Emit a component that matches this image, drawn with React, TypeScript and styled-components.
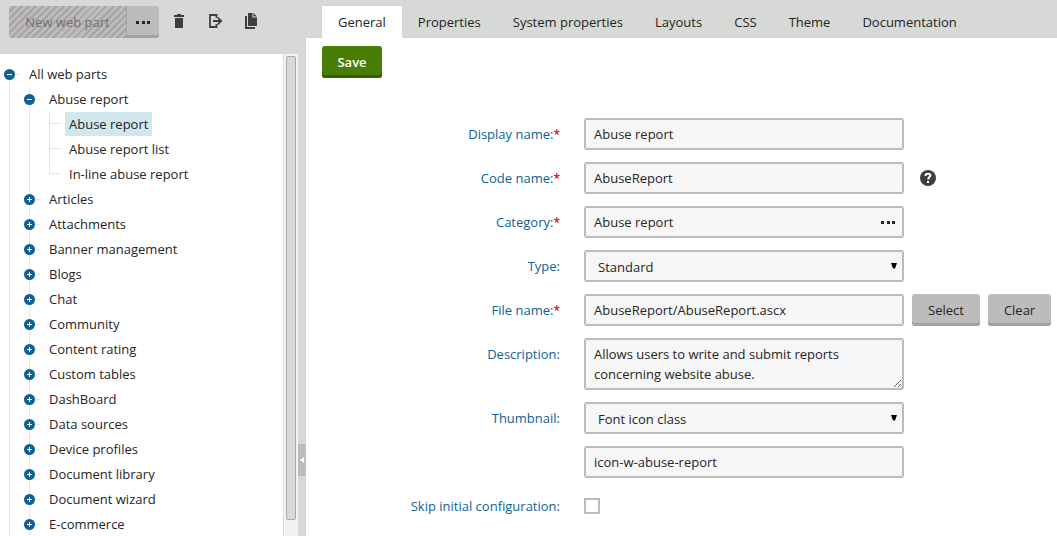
import React from "react";
import styled, { createGlobalStyle, css } from "styled-components";

const c = {
  bar: "#d6d9d6",
  button: "#bdbbbb",
  buttonEdge: "#a3a2a2",
  text: "#262524",
  icon: "#403e3d",
  brand: "#0f6194",
  line: "#e5e5e5",
  field: "#f6f6f6",
};

const GlobalStyle = createGlobalStyle`
  *, *::before, *::after { box-sizing: border-box; }
  body { margin: 0; background: #fff; }
  body, button, input, select, textarea {
    font-family: "Open Sans", "Noto Sans", sans-serif;
    font-size: 13px;
    line-height: 20px;
    color: ${c.text};
  }
  button { border: 0; padding: 0; background: none; cursor: pointer; }
`;

const Shell = styled.div`
  display: flex;
  height: 100vh;
  overflow: hidden;
`;

const Sidebar = styled.aside`
  flex: 0 0 306px;
  display: flex;
  flex-direction: column;
  background: ${c.bar};
`;

const Toolbar = styled.div`
  display: flex;
  align-items: flex-start;
  height: 54px;
  flex: none;
  padding: 6px 9px;
`;

const grayButton = css`
  height: 32px;
  background: ${c.button};
  box-shadow: inset 0 -3px 0 ${c.buttonEdge};
`;

const NewButton = styled.button`
  width: 118px;
  height: 32px;
  border-radius: 3px 0 0 3px;
  border-right: 1px solid ${c.buttonEdge};
  color: #737070;
  background: repeating-linear-gradient(135deg, #bdbbbb 0 3px, #a6a5a5 3px 5px);
`;

const MoreButton = styled.button`
  ${grayButton}
  width: 32px;
  border-radius: 0 3px 3px 0;
  display: flex;
  align-items: center;
  justify-content: center;
  margin-right: 2px;
`;

const IconButton = styled.button`
  width: 36px;
  height: 32px;
  display: flex;
  align-items: center;
  justify-content: center;
`;

const SideBody = styled.div`
  flex: 1;
  min-height: 0;
  display: flex;
`;

const TreePane = styled.nav`
  flex: 1;
  min-width: 0;
  overflow: hidden;
  background: #fff;
  padding: 8px 4px;
`;

const Branch = styled.ul<{ $nested?: boolean }>`
  list-style: none;
  margin: 0 0 0 ${(p) => (p.$nested ? 20 : 0)}px;
  padding: 0;
`;

const Item = styled.li<{ $from?: number; $to?: string }>`
  background: linear-gradient(${c.line}, ${c.line}) 5px ${(p) => p.$from ?? 0}px / 1px
    ${(p) => p.$to ?? "100%"} no-repeat;
`;

const Row = styled.div<{ $leaf?: boolean }>`
  display: flex;
  height: 25px;
  padding-left: ${(p) => (p.$leaf ? 5 : 0)}px;

  &::before {
    content: "";
    order: 1;
    width: ${(p) => (p.$leaf ? 12 : 6)}px;
    height: 1px;
    margin-top: ${(p) => (p.$leaf ? 11 : 12)}px;
    background: ${c.line};
  }
`;

const Toggle = styled.button`
  width: 11px;
  height: 25px;
  display: flex;
  align-items: center;
`;

const NodeLink = styled.a<{ $selected?: boolean }>`
  order: 2;
  height: 24px;
  line-height: 24px;
  margin-left: 4px;
  padding: 0 4px;
  color: ${c.text};
  text-decoration: none;
  white-space: nowrap;
  background: ${(p) => (p.$selected ? "#d0e7ed" : "transparent")};
`;

const ScrollTrack = styled.div`
  flex: 0 0 15px;
  padding: 2px 2px 16px;
  border-left: 1px solid #dcdcdc;
  background: #f2f2f2;
  display: flex;
`;

const ScrollThumb = styled.div`
  flex: 1;
  border: 1px solid #a8a8a8;
  border-radius: 2px;
  background: #d9d9d9;
`;

const Splitter = styled.div`
  flex: 0 0 8px;
  display: flex;
  align-items: flex-end;
  padding-bottom: 60px;
`;

const CollapseButton = styled.button`
  width: 8px;
  height: 32px;
  background: ${c.button};
  display: flex;
  align-items: center;
  justify-content: center;
`;

const Main = styled.main`
  flex: 1;
  min-width: 0;
  display: flex;
  flex-direction: column;
`;

const Tabs = styled.nav`
  display: flex;
  flex: none;
  height: 38px;
  padding: 6px 16px 0;
  background: ${c.bar};
`;

const Tab = styled.a<{ $active?: boolean }>`
  padding: 6px 16px;
  color: ${c.text};
  text-decoration: none;
  white-space: nowrap;
  background: ${(p) => (p.$active ? "#fff" : "transparent")};
`;

const Content = styled.div`
  padding: 8px 0 8px 16px;
`;

const SaveButton = styled.button`
  width: 60px;
  height: 32px;
  border-radius: 3px;
  color: #fff;
  font-weight: 600;
  background: #497d04;
  box-shadow: inset 0 -3px 0 #365e02;
`;

const Form = styled.form`
  display: flex;
  flex-direction: column;
  gap: 12px;
  margin-top: 40px;
`;

const FieldRow = styled.div`
  display: grid;
  grid-template-columns: 262px 320px 1fr;
  align-items: start;
`;

const Label = styled.label`
  padding: 6px 24px 6px 0;
  text-align: right;
  white-space: nowrap;
  color: ${c.brand};
`;

const Required = styled.span`
  color: #e80000;
  font-size: 12px;
  line-height: 12px;
  font-weight: 600;
`;

const Fields = styled.div`
  grid-column: 2;
  position: relative;
  display: flex;
  align-items: center;
  min-height: 32px;
`;

const control = css`
  display: block;
  width: 100%;
  height: 32px;
  margin: 0;
  padding: 4px 8px;
  border: 2px solid ${c.button};
  border-radius: 3px;
  background: ${c.field};
  outline: 0;
`;

const TextInput = styled.input`
  ${control}
`;

const TextArea = styled.textarea`
  ${control}
  height: 52px;
  overflow: hidden;
  resize: vertical;
`;

const Select = styled.select`
  ${control}
  appearance: none;
  padding: 5px 12px 3px;
`;

const SelectArrow = styled.svg`
  position: absolute;
  right: 7px;
  top: 13px;
  pointer-events: none;
`;

const PickButton = styled.button`
  position: absolute;
  right: 2px;
  top: 2px;
  width: 28px;
  height: 28px;
  display: flex;
  align-items: center;
  justify-content: center;
`;

const CheckBox = styled.input`
  appearance: none;
  width: 16px;
  height: 16px;
  margin: 0;
  border: 2px solid ${c.button};
  background: #fff;
`;

const Actions = styled.div`
  display: flex;
  align-items: center;
  gap: 8px;
  min-height: 32px;
  padding-left: 8px;
`;

const ActionButton = styled.button`
  ${grayButton}
  padding: 0 16px;
  border-radius: 3px;
`;

const HelpButton = styled.button`
  width: 16px;
  height: 16px;
  margin-left: 8px;
  display: flex;
`;

const Dots = () => (
  <svg width="15" height="3" viewBox="0 0 15 3" fill={c.text} aria-hidden="true">
    <rect x="0" width="3" height="3" />
    <rect x="6" width="3" height="3" />
    <rect x="11" width="3" height="3" />
  </svg>
);

const TrashIcon = () => (
  <svg width="16" height="16" viewBox="0 0 16 16" fill={c.icon} aria-hidden="true">
    <path d="M6 0h4v1h3v2H3V1h3zM4 4h8v10H4z" />
  </svg>
);

const ExportIcon = () => (
  <svg width="16" height="16" viewBox="0 0 16 16" fill="none" stroke={c.icon} strokeWidth="2" aria-hidden="true">
    <path d="M9.500 4V1H3v12h6.500v-3" strokeWidth="1.800" />
    <path d="M6 7h8M10.800 3.600L14.200 7l-3.400 3.400" strokeWidth="1.800" />
  </svg>
);

const CopyIcon = () => (
  <svg width="16" height="18" viewBox="0 -1 16 18" fill={c.icon} aria-hidden="true">
    <path d="M5 -1h4.500v4.500H14V12H5zM10.500 -1L14 2.500h-3.500zM2 2h2v11h8v2H2z" />
  </svg>
);

const ToggleIcon = ({ open }: { open?: boolean }) => (
  <svg width="11" height="11" viewBox="0 0 11 11" aria-hidden="true">
    <circle cx="5.5" cy="5.5" r="5.5" fill={c.brand} />
    <path d={open ? "M3 5.5h5" : "M3 5.5h5M5.5 3v5"} stroke="#fff" strokeWidth="1" />
  </svg>
);

const HelpIcon = () => (
  <svg width="16" height="16" viewBox="0 0 16 16" aria-hidden="true">
    <circle cx="8" cy="8" r="8" fill={c.icon} />
    <path d="M5.6 6V5.4C5.6 4.300 6.500 3.800 8 3.800s2.400.7 2.400 1.800c0 1.500-2.200 1.600-2.200 3.900" fill="none" stroke="#fff" strokeWidth="2" />
    <rect x="7" y="11" width="2" height="2" fill="#fff" />
  </svg>
);

const Arrow = () => (
  <SelectArrow width="6" height="6" viewBox="0 0 6 6" aria-hidden="true">
    <path d="M0 0h6L4 5.500H2z" />
  </SelectArrow>
);

const tabs = ["General", "Properties", "System properties", "Layouts", "CSS", "Theme", "Documentation"];

const leaves = ["Abuse report", "Abuse report list", "In-line abuse report"];

const categories = [
  "Articles",
  "Attachments",
  "Banner management",
  "Blogs",
  "Chat",
  "Community",
  "Content rating",
  "Custom tables",
  "DashBoard",
  "Data sources",
  "Device profiles",
  "Document library",
  "Document wizard",
  "E-commerce",
];

type NodeProps = { name: string; open?: boolean };

const TreeNode = ({ name, open }: NodeProps) => (
  <Row>
    <Toggle type="button" aria-expanded={!!open} aria-label={name}>
      <ToggleIcon open={open} />
    </Toggle>
    <NodeLink href="#">{name}</NodeLink>
  </Row>
);

type FieldProps = {
  label?: string;
  id: string;
  required?: boolean;
  actions?: React.ReactNode;
  children: React.ReactNode;
};

const Field = ({ label, id, required, actions, children }: FieldProps) => (
  <FieldRow>
    {label && (
      <Label htmlFor={id}>
        {label}:{required && <Required>*</Required>}
      </Label>
    )}
    <Fields>{children}</Fields>
    {actions && <Actions>{actions}</Actions>}
  </FieldRow>
);

export default function App() {
  return (
    <Shell>
      <GlobalStyle />
      <Sidebar>
        <Toolbar>
          <NewButton type="button" disabled>
            New web part
          </NewButton>
          <MoreButton type="button" aria-label="More actions">
            <Dots />
          </MoreButton>
          <IconButton type="button" aria-label="Delete">
            <TrashIcon />
          </IconButton>
          <IconButton type="button" aria-label="Export">
            <ExportIcon />
          </IconButton>
          <IconButton type="button" aria-label="Clone">
            <CopyIcon />
          </IconButton>
        </Toolbar>
        <SideBody>
          <TreePane aria-label="Web parts">
            <Branch>
              <Item $from={12}>
                <TreeNode name="All web parts" open />
                <Branch $nested>
                  <Item>
                    <TreeNode name="Abuse report" open />
                    <Branch $nested>
                      {leaves.map((name, i) => (
                        <Item key={name} $to={i === leaves.length - 1 ? "12px" : "100%"}>
                          <Row $leaf>
                            <NodeLink href="#" $selected={i === 0}>
                              {name}
                            </NodeLink>
                          </Row>
                        </Item>
                      ))}
                    </Branch>
                  </Item>
                  {categories.map((name) => (
                    <Item key={name}>
                      <TreeNode name={name} />
                    </Item>
                  ))}
                </Branch>
              </Item>
            </Branch>
          </TreePane>
          <ScrollTrack>
            <ScrollThumb />
          </ScrollTrack>
          <Splitter>
            <CollapseButton type="button" aria-label="Collapse panel">
              <svg width="4" height="6" viewBox="0 0 4 6" fill="#fff" aria-hidden="true">
                <path d="M4 0v6L0 3z" />
              </svg>
            </CollapseButton>
          </Splitter>
        </SideBody>
      </Sidebar>
      <Main>
        <Tabs>
          {tabs.map((name, i) => (
            <Tab key={name} href="#" $active={i === 0}>
              {name}
            </Tab>
          ))}
        </Tabs>
        <Content>
          <SaveButton type="submit" form="webpart">
            Save
          </SaveButton>
          <Form id="webpart">
            <Field label="Display name" id="display" required>
              <TextInput id="display" defaultValue="Abuse report" />
            </Field>
            <Field
              label="Code name"
              id="code"
              required
              actions={
                <HelpButton type="button" aria-label="Help">
                  <HelpIcon />
                </HelpButton>
              }
            >
              <TextInput id="code" defaultValue="AbuseReport" />
            </Field>
            <Field label="Category" id="category" required>
              <TextInput id="category" defaultValue="Abuse report" />
              <PickButton type="button" aria-label="Choose category">
                <Dots />
              </PickButton>
            </Field>
            <Field label="Type" id="type">
              <Select id="type">
                <option>Standard</option>
              </Select>
              <Arrow />
            </Field>
            <Field
              label="File name"
              id="file"
              required
              actions={
                <>
                  <ActionButton type="button">Select</ActionButton>
                  <ActionButton type="button">Clear</ActionButton>
                </>
              }
            >
              <TextInput id="file" defaultValue="AbuseReport/AbuseReport.ascx" />
            </Field>
            <Field label="Description" id="description">
              <TextArea
                id="description"
                defaultValue="Allows users to write and submit reports concerning website abuse."
              />
            </Field>
            <Field label="Thumbnail" id="thumbnail">
              <Select id="thumbnail">
                <option>Font icon class</option>
              </Select>
              <Arrow />
            </Field>
            <Field id="iconclass">
              <TextInput id="iconclass" aria-label="Icon class" defaultValue="icon-w-abuse-report" />
            </Field>
            <Field label="Skip initial configuration" id="skip">
              <CheckBox type="checkbox" id="skip" />
            </Field>
          </Form>
        </Content>
      </Main>
    </Shell>
  );
}
